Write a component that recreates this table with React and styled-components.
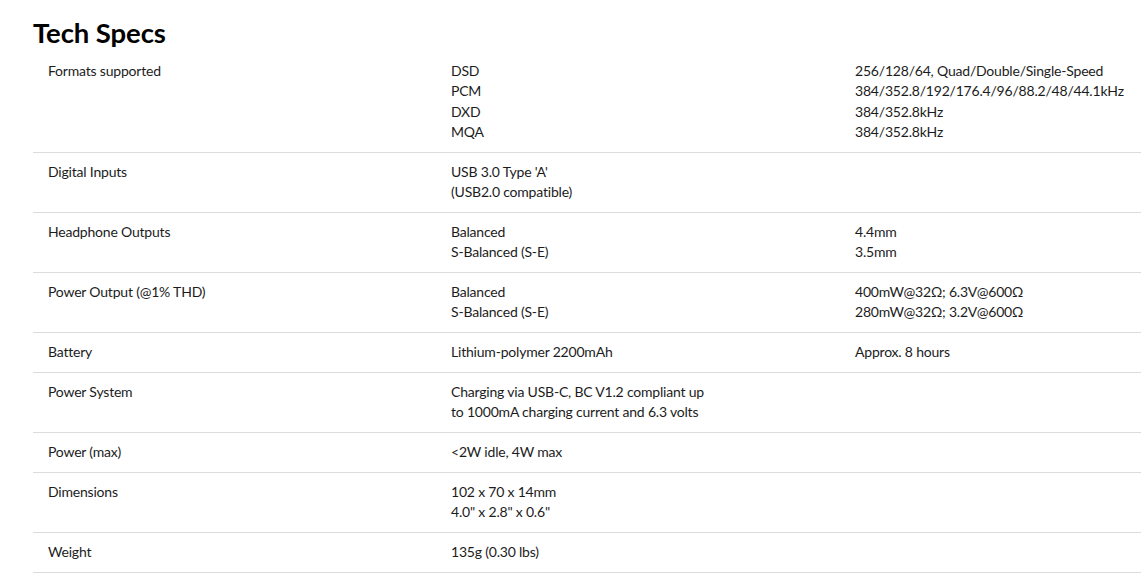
import React from "react";
import styled, { createGlobalStyle } from "styled-components";

const Global = createGlobalStyle`
  html, body { margin: 0; padding: 0; background: #fff; overflow: hidden; }
  body { font-family: Lato, "Open Sans", Arial, sans-serif; color: #1c1c1c; }
`;

const Page = styled.div`
  padding: 14px 0 0 33px;
  width: 1108px;
`;

const Title = styled.h2`
  margin: 0 0 1px;
  font-family: Lato, Arial, sans-serif;
  font-weight: 700;
  font-size: 27.5px;
  line-height: 37px;
  color: #000;
  letter-spacing: -0.1px;
`;

const Table = styled.div`
  display: flex;
  flex-direction: column;
`;

const Row = styled.div`
  display: grid;
  grid-template-columns: 403px 404px 1fr;
  padding: 9px 0 9.6px 15px;
  border-bottom: 1px solid #dcdcdc;
  font-size: 14px;
  line-height: 20.25px;
  letter-spacing: -0.2px;
`;

const Cell = styled.div`
  white-space: nowrap;
`;

const Line = styled.div``;

const specs = [
  ["Formats supported", ["DSD", "PCM", "DXD", "MQA"], ["256/128/64, Quad/Double/Single-Speed", "384/352.8/192/176.4/96/88.2/48/44.1kHz", "384/352.8kHz", "384/352.8kHz"]],
  ["Digital Inputs", ["USB 3.0 Type 'A'", "(USB2.0 compatible)"], []],
  ["Headphone Outputs", ["Balanced", "S-Balanced (S-E)"], ["4.4mm", "3.5mm"]],
  ["Power Output (@1% THD)", ["Balanced", "S-Balanced (S-E)"], ["400mW@32Ω; 6.3V@600Ω", "280mW@32Ω; 3.2V@600Ω"]],
  ["Battery", ["Lithium-polymer 2200mAh"], ["Approx. 8 hours"]],
  ["Power System", ["Charging via USB-C, BC V1.2 compliant up", "to 1000mA charging current and 6.3 volts"], []],
  ["Power (max)", ["<2W idle, 4W max"], []],
  ["Dimensions", ["102 x 70 x 14mm", "4.0\" x 2.8\" x 0.6\""], []],
  ["Weight", ["135g (0.30 lbs)"], []],
];

export default function App() {
  return (
    <>
      <Global />
      <Page>
        <Title>Tech Specs</Title>
        <Table>
          {specs.map(([label, mid, right]) => (
            <Row key={label}>
              <Cell>{label}</Cell>
              <Cell>{mid.map((t) => <Line key={t}>{t}</Line>)}</Cell>
              <Cell>{right.map((t) => <Line key={t}>{t}</Line>)}</Cell>
            </Row>
          ))}
        </Table>
      </Page>
    </>
  );
}
